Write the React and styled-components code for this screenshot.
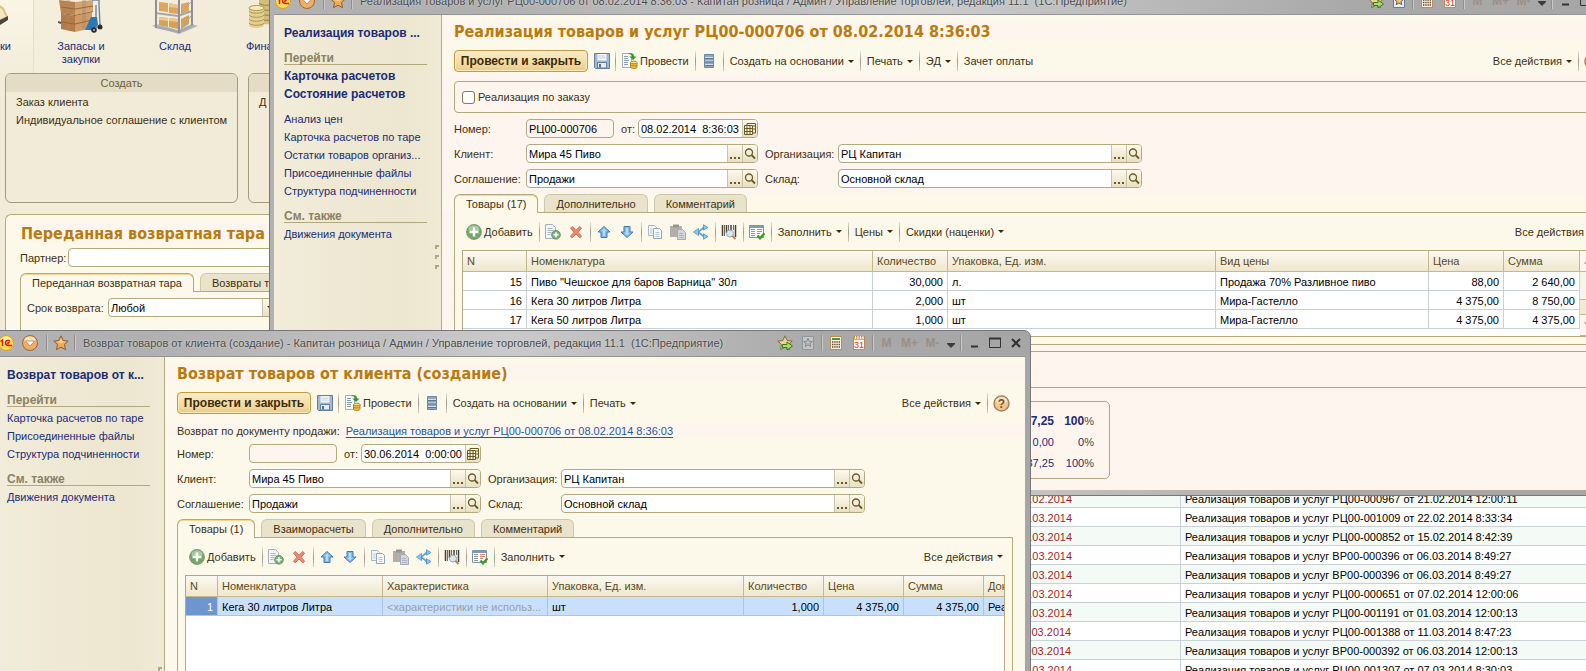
import styled, { createGlobalStyle } from "styled-components";

const GlobalStyle = createGlobalStyle`
    * {
        box-sizing: border-box;
    }
    body {
        margin: 0;
        overflow: hidden;
        font-family: "Liberation Sans", Arial, sans-serif;
        font-size: 11px;
        line-height: 18px;
        color: #3f3010;
    }
    button, input, select {
        font: inherit;
        color: inherit;
        margin: 0;
        padding: 0;
        border: 0;
        background: none;
    }
    a {
        color: #1b2c78;
        text-decoration: none;
    }
    svg {
        display: block;
        flex: none;
    }
`;

const LINE = "#b2a97f";
const CREAM = "#fcf9ea";
const PINK = "#fef5ee";

/* desktop */
const Desktop = styled.div`
    position: relative;
    height: 100vh;
    overflow: hidden;
    background: #f1ebd8;
`;
const Sections = styled.nav`
    display: flex;
    height: 73px;
    background: linear-gradient(90deg, #f4efdd, #f1ebd8 300px);
`;
const Section = styled.a`
    width: ${p => (p.$cut ? "34px" : "94px")};
    flex: none;
    display: flex;
    flex-direction: column;
    align-items: ${p => (p.$cut ? "flex-start" : "center")};
    gap: 6px;
    text-align: center;
    line-height: 13px;
    background: ${p => (p.$cut ? "linear-gradient(#faf6e6, #f2ecda)" : "none")};
    border-right: ${p => (p.$cut ? "1px solid #e6dfc8" : "0")};
`;
const SectionLabel = styled.span`
    max-width: 60px;
`;
const Cards = styled.div`
    display: flex;
    gap: 10px;
    padding: 0 5px;
`;
const Card = styled.section`
    width: 233px;
    height: 130px;
    border: 1px solid #a39b7b;
    border-radius: 6px;
    overflow: hidden;
`;
const CardTitle = styled.h2`
    margin: 0 0 1px;
    height: 18px;
    font-size: 11px;
    font-weight: 400;
    line-height: 18px;
    text-align: center;
    color: #6d6140;
    background: #e4dcc4;
`;
const CardLink = styled.a`
    display: block;
    padding-left: 10px;
    color: #3f3010;
`;
const Report = styled.section`
    isolation: isolate;
    margin: 11px 0 0 5px;
    padding: 8px 0 0 14px;
    border: 1px solid ${LINE};
    border-right: 0;
    border-radius: 6px 0 0 0;
    background: ${CREAM};
`;
const Heading = styled.h1`
    margin: 0;
    padding: 2px 0 0 1px;
    font-family: "DejaVu Sans Condensed", "DejaVu Sans", sans-serif;
    font-size: 16px;
    font-weight: 700;
    line-height: 17px;
    white-space: nowrap;
    color: #b97c0b;
    background: ${PINK};
`;
const ReportRow = styled.div`
    display: flex;
    align-items: center;
    gap: 2px;
    padding: 6px 0;
`;
const ReportBody = styled.div`
    border: 1px solid ${LINE};
    border-width: 1px 0 0 1px;
`;
const ListSpace = styled.div`
    height: 166px;
`;
const ListTable = styled.table`
    width: 100%;
    table-layout: fixed;
    border-spacing: 0;
    background: #fff;
    color: #000;
    td {
        height: 19px;
        padding: 2px 4px 0;
        line-height: 16px;
        border-right: 1px solid #c9d0d6;
        border-bottom: 1px solid #c9d0d6;
        white-space: nowrap;
    }
    td:last-child {
        border-right: 0;
    }
    tr:nth-child(odd) {
        background: #f4faf6;
    }
`;
const DateCell = styled.td`
    color: #a81e1e;
`;

/* windows */
const Frame = styled.section`
    position: absolute;
    left: ${p => p.$left}px;
    right: ${p => p.$right}px;
    top: ${p => p.$top}px;
    bottom: ${p => p.$bottom}px;
    display: flex;
    flex-direction: column;
    border: 1px solid #77777b;
    border-radius: 7px 7px 0 0;
    background: linear-gradient(90deg, #b2b2b2, #b0b0b0 15%, #cacaca 50%, #a9a9a9 80%, #a6a6a6);
    padding: 0 5px 5px 4px;
    overflow: hidden;
`;
const TitleBar = styled.header`
    display: flex;
    align-items: center;
    height: 26px;
    flex: none;
    margin-right: -1px;
    padding-bottom: 2px;
    border-bottom: 1px solid #939396;
`;
const TitleText = styled.span`
    flex: 1;
    margin-left: 6px;
    font-size: 11px;
    white-space: pre;
    overflow: hidden;
    color: #4c4c4c;
    text-shadow: 0 0 2px #e2e2e2;
`;
const BarButton = styled.button`
    display: flex;
    align-items: center;
    justify-content: center;
    width: ${p => p.$w || 23}px;
    height: 22px;
    flex: none;
`;
const MemoryButton = styled(BarButton)`
    font-size: 12px;
    font-weight: 700;
    color: #9a8f88;
`;
const BarSep = styled.i`
    width: 1px;
    height: 16px;
    flex: none;
    margin: 0 2px;
    background: #8f8f8f;
    box-shadow: 1px 0 0 #c8c8c8;
`;
const Client = styled.div`
    flex: 1;
    min-height: 0;
    display: flex;
    background: ${CREAM};
`;
const Sidebar = styled.aside`
    width: 168px;
    flex: none;
    display: flex;
    align-items: center;
    padding: 9px 2px 0 10px;
    border-right: 1px solid ${LINE};
    background: linear-gradient(90deg, #f2edda, #efe9d5 30%, #ede6d0 80%, #f0ead6);
`;
const Nav = styled.nav`
    flex: 1;
    min-width: 0;
    align-self: stretch;
`;
const NavLink = styled.a`
    display: block;
    white-space: nowrap;
    font-size: ${p => (p.$strong ? 12 : 11)}px;
    font-weight: ${p => (p.$strong ? 700 : 400)};
    margin-bottom: ${p => (p.$last ? 7 : 0)}px;
`;
const NavTitle = styled.h2`
    margin: 8px 0 2px;
    height: 15px;
    font-size: 12px;
    line-height: 16px;
    color: #8c8163;
    border-bottom: 1px solid ${LINE};
`;
const Grip = styled.div`
    display: grid;
    gap: 6px;
    margin-left: 8px;
    i {
        width: 4px;
        height: 4px;
        border: 1px solid #b2a97f;
        border-width: 2px 0 0 2px;
    }
`;
const Main = styled.main`
    flex: 1;
    min-width: 0;
    display: flex;
    flex-direction: column;
    background: ${p => p.$bg};
`;
const MainHeading = styled(Heading)`
    padding: 2px 12px 0;
    border-top: 6px solid ${CREAM};
`;
const CommandBar = styled.div`
    display: flex;
    align-items: center;
    height: 34px;
    flex: none;
    padding: 10px 12px 2px;
    background: ${CREAM};
`;
const TableBar = styled.div`
    display: flex;
    align-items: center;
    height: 37px;
    flex: none;
    padding: 0 5px 0 7px;
`;
const PrimaryButton = styled.button`
    width: 134px;
    height: 22px;
    flex: none;
    margin-right: 2px;
    border: 1px solid #c49a45;
    border-radius: 4px;
    box-shadow: inset 0 0 0 1px #fbe8b8;
    background: linear-gradient(#fbedca, #f3dba2 60%, #e9cc88);
    font-size: 12px;
    font-weight: 700;
    line-height: 18px;
    white-space: nowrap;
    color: #3b2a08;
`;
const ToolButton = styled.button`
    display: flex;
    align-items: center;
    gap: ${p => (p.$icon ? 2 : 4)}px;
    flex: none;
    padding: 0 4px;
    white-space: nowrap;
`;
const IconButton = styled.button`
    display: flex;
    justify-content: center;
    width: 23px;
    flex: none;
`;
const ToolSep = styled.i`
    width: 1px;
    height: 20px;
    flex: none;
    margin: 0 2px;
    background: linear-gradient(#e9e2d8, #9c958e 50%, #d5cec4);
`;
const Push = styled.span`
    flex: 1;
`;
const Form = styled.div`
    display: flex;
    flex-direction: column;
    gap: 6px;
    padding: 7px 12px 6px;
`;
const Group = styled.div`
    display: flex;
    align-items: center;
    gap: 3px;
    height: ${p => p.$h}px;
    padding-left: 7px;
    border: 1px solid ${LINE};
    border-radius: 4px;
`;
const Check = styled.input`
    appearance: none;
    width: 13px;
    height: 13px;
    border: 1px solid #857b56;
    border-radius: 3px;
    background: #fff;
`;
const SourceLine = styled.div`
    display: flex;
    gap: 6px;
    margin: 0 -12px;
    padding: 1px 12px 0;
    line-height: 14px;
    background: ${PINK};
    a {
        color: #1c58a8;
        text-decoration: underline;
        text-underline-offset: 2px;
    }
`;
const FieldRow = styled.div`
    display: flex;
    align-items: center;
    height: 19px;
`;
const Label = styled.label`
    width: ${p => (p.$w ? p.$w + "px" : "auto")};
    margin-left: ${p => p.$gap || 0}px;
    flex: none;
    white-space: nowrap;
`;
const Field = styled.span`
    display: flex;
    width: ${p => p.$w}px;
    height: 19px;
    flex: none;
    border: 1px solid ${LINE};
    border-radius: 4px;
    overflow: hidden;
    color: #000;
    background: ${p => (p.$plain ? PINK : "#fff")};
    input, select {
        flex: 1;
        min-width: 0;
        padding-left: 2px;
        appearance: none;
        outline: 0;
    }
`;
const FieldButton = styled.button`
    display: flex;
    align-items: center;
    justify-content: center;
    width: 15px;
    flex: none;
    border-left: 1px solid #cbc3a1;
    background: linear-gradient(#fdfaec, #e8e0c5);
`;
const Tabs = styled.div`
    display: flex;
    gap: 6px;
    height: 18px;
    flex: none;
    padding: 0 ${p => (p.$flush ? 0 : 12)}px;
    background: ${CREAM};
`;
const Tab = styled.button`
    height: ${p => (p.$active ? 19 : 18)}px;
    flex: none;
    padding: 0 11px;
    line-height: 16px;
    white-space: nowrap;
    border: 1px solid ${p => (p.$active ? LINE : "#cfc8a6")};
    border-bottom: 0;
    border-radius: 6px 6px 0 0;
    background: ${p => (p.$active ? CREAM : "#e9e3cc")};
    box-shadow: ${p => (p.$active ? "inset 0 1px 0 #f6d58f" : "none")};
    z-index: 1;
`;
const Panel = styled.div`
    flex: ${p => (p.$fill ? "1" : "none")};
    min-height: 0;
    display: flex;
    flex-direction: column;
    margin: 0 12px;
    padding-bottom: ${p => (p.$fill ? 0 : 7)}px;
    border: 1px solid ${LINE};
    background: ${CREAM};
`;
const Grid = styled.div`
    flex: ${p => (p.$fill ? "1" : "none")};
    display: flex;
    margin: 0 7px;
    border: 1px solid ${LINE};
    background: #fff;
    overflow: hidden;
`;
const GridBody = styled.div`
    flex: 1;
    min-width: 0;
    overflow: hidden;
    padding-bottom: 7px;
`;
const Table = styled.table`
    width: ${p => p.$w};
    table-layout: fixed;
    border-spacing: 0;
    color: #000;
    th, td {
        padding: 0 4px;
        white-space: nowrap;
        overflow: hidden;
        text-overflow: ellipsis;
        text-align: left;
    }
    th {
        height: 21px;
        font-weight: 400;
        color: #5c4a20;
        background: linear-gradient(#fbf9f2, #efe7cc);
        border-right: 1px solid #c2b990;
        border-bottom: 1px solid #c2b990;
    }
    td {
        height: 19px;
        padding-top: 2px;
        line-height: 16px;
        border-right: 1px solid ${p => (p.$selected ? "#a9c6ea" : "#c9d0d6")};
        border-bottom: 1px solid ${p => (p.$selected ? "#a9c6ea" : "#c9d0d6")};
        background: ${p => (p.$selected ? "#c8e0fe" : "#fff")};
    }
    th:last-child, td:last-child {
        text-overflow: clip;
    }
`;
const Num = styled.td`
    &&& {
        text-align: right;
    }
`;
const CurrentCell = styled(Num)`
    &&& {
        color: #fff;
        background: #6c96cd;
    }
`;
const EmptyCell = styled.td`
    &&& {
        color: #9a9fa8;
    }
`;
const Scroll = styled.div`
    width: 15px;
    flex: none;
    display: flex;
    flex-direction: column;
    background: #f7f4ea;
`;
const ScrollEnd = styled.button`
    display: flex;
    align-items: center;
    justify-content: center;
    height: 21px;
    flex: none;
    border-bottom: 1px solid #c2b990;
    background: ${PINK};
`;
const ScrollThumb = styled.div`
    height: 16px;
    flex: none;
    margin-top: 27px;
    border: 1px solid #c2b990;
    border-width: 1px 0;
    background: #f1ead2;
`;
const Footer = styled.div`
    padding: 6px 12px 0;
`;
const Totals = styled.table`
    width: 656px;
    height: 78px;
    margin-top: 13px;
    padding: 8px 15px 5px 0;
    border: 1px solid ${LINE};
    border-radius: 5px;
    border-spacing: 0;
    color: #1b2c78;
    td {
        height: 21px;
        padding: 0;
        text-align: right;
    }
    td + td {
        width: 40px;
    }
    tr:first-child {
        font-size: 12px;
        font-weight: 700;
    }
    small {
        font-size: 11px;
        font-weight: 400;
        color: #4c4740;
    }
`;

/* icons */
const Svg = ({ w = 16, h = 16, children }) => (
    <svg width={w} height={h} viewBox={`0 0 ${w} ${h}`} fill="none" aria-hidden="true">
        {children}
    </svg>
);
const Caret = () => (
    <Svg w={6} h={3}>
        <path d="M0 0h6L3 3z" fill="#3a2a0c" />
    </Svg>
);
const ScrollMark = ({ down }) => (
    <Svg w={8} h={6}>
        <path d={down ? "M0 0h8L4 6z" : "M0 6h8L4 0z"} fill="#b3aa92" />
    </Svg>
);
const Logo = () => (
    <Svg>
        <circle cx="8" cy="8" r="7.5" fill="#fbdc4f" stroke="#e9952b" />
        <ellipse cx="8" cy="4.5" rx="5" ry="3" fill="#fff3a8" />
        <path d="M2.5 6.5l2-1.5v6M12 6.5c-.6-1.4-4.5-1.6-4.5 1.3S10 10.5 14 10.5M11.5 7.8c-1.5-.8-2.5.8-1 1.2" stroke="#d8201a" strokeWidth="1.5" />
    </Svg>
);
const MenuBall = () => (
    <Svg>
        <circle cx="8" cy="8" r="7.5" fill="#f0ae64" stroke="#9a6a3a" />
        <ellipse cx="8" cy="4.8" rx="5.5" ry="3.3" fill="#fbe2c0" />
        <path d="M3.5 6h9L8 11z" fill="#fff" stroke="#a0713f" strokeWidth=".7" />
    </Svg>
);
const starPath = "M8 .8l2.2 4.7 5 .6-3.7 3.5 1 5.1L8 12.2l-4.5 2.5 1-5.1L.8 6.1l5-.6z";
const Star = () => (
    <Svg>
        <path d={starPath} fill="#f5a94e" stroke="#8a6038" />
        <path d="M8 3l1.3 3.3 3 .4L8 8.5 3.7 6.7l3-.4z" fill="#fbce90" />
    </Svg>
);
const StarGo = () => (
    <Svg>
        <path d={starPath} fill="#f7cd8c" stroke="#7d6a4a" />
        <path d="M5.5 9.5H10V7l5.500 4-5.500 4v-2.500H5.500z" fill="#a6e06a" stroke="#357a1e" />
    </Svg>
);
const PageStar = ({ faded }) => (
    <Svg>
        <g opacity={faded ? 0.4 : 1}>
            <path d="M2.5 1.5h11v13h-11z" fill="#e4edf6" stroke="#5f7f9f" />
            <path d="M8 3.5l1.3 2.800 3 .3-2.200 2 .6 3L8 10l-2.700 1.600.6-3-2.200-2 3-.3z" fill={faded ? "#c5cdd6" : "#eec287"} stroke="#6b5a4a" />
        </g>
    </Svg>
);
const Calc = () => (
    <Svg>
        <path d="M2.5 1.5h11v13h-11z" fill="#fff3df" stroke="#b98a5b" />
        <path d="M4 3h8v2H4z" fill="#3f9a3f" />
        <path d="M4 7h8M4 9.5h8M4 12h8" stroke="#5a4630" strokeWidth="1.4" strokeDasharray="1.4 .8" />
    </Svg>
);
const CalendarDay = () => (
    <svg width="16" height="16" viewBox="0 0 16 16" aria-hidden="true">
        <path d="M2.5 1.5h11v13h-11z" fill="#fff8ee" stroke="#b98a5b" />
        <path d="M3 2h10v3H3z" fill="#f2a64e" />
        <path d="M4.5 1v3M7 1v3M9.5 1v3M12 1v3" stroke="#fff" />
        <text x="8" y="13" textAnchor="middle" fontSize="9" fontFamily="Liberation Sans" fill="#d03a1c">31</text>
    </svg>
);
const MoreMark = () => (
    <Svg w={8} h={11}>
        <path d="M0 6h8v1L4 11 0 7z" fill="#3c3c3c" />
    </Svg>
);
const Minimize = () => (
    <Svg w={12} h={12}>
        <path d="M3 9.5h7" stroke="#333" strokeWidth="2" />
    </Svg>
);
const Maximize = () => (
    <Svg w={12} h={12}>
        <path d="M.5 1.5h11v9H.5z" stroke="#333" />
        <path d="M0 1.5h12" stroke="#333" strokeWidth="2" />
    </Svg>
);
const Close = () => (
    <Svg w={12} h={12}>
        <path d="M2 2l8 8M10 2l-8 8" stroke="#333" strokeWidth="2.2" />
    </Svg>
);
const Save = () => (
    <Svg>
        <path d="M.5.5h15v15h-14l-1-1z" fill="#a3b8d0" stroke="#637f9e" />
        <path d="M3.5 1h9v6.5h-9z" fill="#f6f8fb" />
        <path d="M4.5 3h7M4.5 5h7" stroke="#c3cedb" />
        <path d="M3.5 9.5h9V15h-9z" fill="#e6ebf0" stroke="#637f9e" />
        <path d="M5 11h2v3.5H5z" fill="#566f8a" />
    </Svg>
);
const Post = () => (
    <Svg>
        <path d="M.5.5h9v14h-9z" fill="#f6f8f9" stroke="#a2aeb9" />
        <path d="M2 3.5h4M2 5.5h4M2 7.5h5M2 9.5h4M2 11.5h4" stroke="#8b9aa8" />
        <path d="M6 .8c4-1.2 6 0 6 2.7h2.5L11 7 7.5 3.5H10c0-1.3-1-2.2-4-2.7z" fill="#2f9a2b" />
        <path d="M8.5 9.5V14c0 2 6.5 2 6.5 0V9.5z" fill="#edc04a" stroke="#b4851f" />
        <ellipse cx="11.8" cy="9.5" rx="3.2" ry="1.3" fill="#fbe28c" stroke="#b4851f" />
        <path d="M8.5 12c1 1.3 5.5 1.3 6.5 0" stroke="#b4851f" />
    </Svg>
);
const Stack = () => (
    <Svg>
        <path d="M3.5 1.5h9v13h-9z" fill="#8fa7bf" stroke="#6f88a2" />
        <path d="M4 4.5h8M4 8h8M4 11.5h8" stroke="#d5e0ea" />
        <path d="M4 5.5h8M4 9h8M4 12.5h8" stroke="#5d7690" />
    </Svg>
);
const Help = () => (
    <svg width="17" height="17" viewBox="0 0 17 17" aria-hidden="true">
        <circle cx="8.5" cy="8.5" r="7.5" fill="#f3c58d" stroke="#a3845c" strokeWidth="1.5" />
        <ellipse cx="8.5" cy="5.5" rx="5.5" ry="3.5" fill="#fbe4c4" />
        <text x="8.5" y="13" textAnchor="middle" fontSize="12" fontWeight="700" fontFamily="Liberation Sans" fill="#75501f">?</text>
    </svg>
);
const Plus = () => (
    <Svg>
        <circle cx="8" cy="8" r="7.3" fill="#70a864" stroke="#7f9a7a" strokeWidth="1.2" />
        <ellipse cx="8" cy="5" rx="5.5" ry="3.5" fill="#a5cc9c" />
        <path d="M8 3.5v9M3.5 8h9" stroke="#fff" strokeWidth="2.4" />
    </Svg>
);
const PageAdd = () => (
    <Svg>
        <path d="M.5.5h7l3 3v11H.5z" fill="#f2f6f9" stroke="#a3b0bd" />
        <path d="M2.5 4.5h5M2.5 6.5h6M2.5 8.5h4M2.5 10.5h3" stroke="#a9b6c3" />
        <circle cx="11" cy="10.8" r="4.3" fill="#7db274" stroke="#6a9162" />
        <path d="M11 8.3v5M8.5 10.8h5" stroke="#fff" strokeWidth="1.5" />
    </Svg>
);
const Cross = () => (
    <Svg>
        <path d="M2.5 4.2l1.7-1.7L8 6.2l3.8-3.7 1.7 1.7L10 8.2l3.5 4-1.7 1.7L8 10l-3.8 3.9-1.7-1.7 3.5-4z" fill="#ee8a73" stroke="#cf6b55" />
    </Svg>
);
const Arrow = ({ down }) => (
    <Svg>
        <g transform={down ? "rotate(180 8 8)" : undefined}>
            <path d="M8 2.5L14 8h-3v5.5H5V8H2z" fill="#7dbcee" stroke="#4878a8" strokeLinejoin="round" />
            <path d="M8 4.5L10.5 7H9v5H7V7H5.5z" fill="#b4dbf8" />
        </g>
    </Svg>
);
const Copy = () => (
    <Svg>
        <path d="M1.5 1.5h6l2 2v8h-8z" fill="#f3f7fa" stroke="#a6b8ca" />
        <path d="M6.5 4.5h6l2 2v8h-8z" fill="#f9fbfd" stroke="#8fa6bf" />
        <path d="M8.5 8.5h4M8.5 10.5h4M8.5 12.5h4M3 5h2.5M3 7h2.5M3 9h2.5" stroke="#b4c5d7" />
    </Svg>
);
const Paste = () => (
    <Svg>
        <path d="M0 2h12v11H0z" fill="#b3aeaa" />
        <path d="M3 .5h6v3H3z" fill="#98948f" />
        <path d="M7.5 5.5h5l3 3v7h-8z" fill="#d2d7de" stroke="#a4adb7" />
        <path d="M9 9.5h4M9 11.5h5M9 13.5h5" stroke="#adb5be" />
    </Svg>
);
const Share = () => (
    <Svg>
        <path d="M12 3.5C8 3.5 8 8 4 8c4 0 4 4.5 8 4.5" stroke="#5a9fcf" strokeWidth="1.8" />
        <path d="M.5 8l5-3.5v7zM10.5.8L15 3.5l-4.5 2.7zM10.5 9.8l4.5 2.7-4.5 2.7z" fill="#8fc8ea" stroke="#4a8fc4" strokeWidth=".8" />
    </Svg>
);
const Barcode = () => (
    <Svg>
        <path d="M1.5 1v11M5.5 1v8M10 1v5M14.5 1v12" stroke="#4a4238" strokeWidth="1.5" />
        <path d="M3.5 1v11M7.5 1v5M12.5 1v5" stroke="#4a4238" strokeWidth=".8" />
        <circle cx="9" cy="9.5" r="3.5" fill="#d6e8f6" stroke="#9aa8b4" />
        <path d="M11.5 12l3 3" stroke="#c08457" strokeWidth="2" />
    </Svg>
);
const Checklist = () => (
    <Svg>
        <path d="M.5 1.5h14v12H.5z" fill="#fbfcfd" stroke="#8094a8" />
        <path d="M1 2h13v2H1z" fill="#7f9ab5" />
        <path d="M2 5.5h4M2 7.5h4M2 9.5h4M2 11.5h4" stroke="#8d9aa7" />
        <path d="M8 5.5h5M8 7.5h5M8 9.5h3" stroke="#d98470" />
        <path d="M8.5 11.5l2.5 2.8 4.5-5" stroke="#3f9c2c" strokeWidth="2.4" />
    </Svg>
);
const Lens = () => (
    <Svg w={12} h={12}>
        <circle cx="5" cy="4.5" r="3.5" stroke="#6b5a22" strokeWidth="1.3" />
        <path d="M7.5 7l3.5 3.5" stroke="#6b5a22" strokeWidth="1.8" />
    </Svg>
);
const Dots = () => (
    <Svg w={10} h={12}>
        <path d="M0 9h2v2H0zM4 9h2v2H4zM8 9h2v2H8z" fill="#6b5a22" />
    </Svg>
);
const DateIcon = () => (
    <Svg w={12} h={12}>
        <path d="M3 .5h8.5V10H9M3 .5V3" stroke="#6b5a22" />
        <path d="M.5 2.5h8v9h-8z" fill="#f4efd9" stroke="#6b5a22" />
        <path d="M.5 5.5h8M.5 8.5h8M3 2.5v9M6 2.5v9M9 3h2M9 6h2" stroke="#6b5a22" />
    </Svg>
);
const SalesPicture = () => (
    <svg width="10" height="34" viewBox="0 0 10 34" aria-hidden="true">
        <path d="M0 5l4 3 4 9-8 3z" fill="#dcc284" />
        <path d="M0 8l2 1 4 8-6 2z" fill="#f4e8c2" />
        <path d="M0 20l8-4v4l-8 5z" fill="#4b4540" />
    </svg>
);
const BoxesPicture = () => (
    <svg width="46" height="34" viewBox="0 0 46 34" aria-hidden="true">
        <path d="M1 0l16 2v13L3 13z" fill="#b98250" />
        <path d="M17 2l18-2v11l-18 4z" fill="#d3a473" />
        <path d="M3 14l14 2v16L3 29z" fill="#b67a48" />
        <path d="M17 16l17-4v16l-17 4z" fill="#cf9a66" />
        <path d="M9 0v30M11 0v31M25 0v30M27 0v29" stroke="#a98a68" strokeWidth=".8" />
        <path d="M3 7l14 2 18-3M3 22l14 2 17-4M3 13.5l14 2 18-4" stroke="#96663c" fill="none" />
        <path d="M0 22l3 1" stroke="#555" strokeWidth="2" />
        <path d="M34 0h7v5l1 20-4 3M38 5v18" stroke="#6a89a8" strokeWidth="1.4" fill="none" />
        <path d="M27 30l6-13h6l1 8-5 5z" fill="#2a78b8" />
        <circle cx="36" cy="30" r="2.8" fill="#2d2d30" />
        <circle cx="36" cy="30" r="1" fill="#b8b8b8" />
        <circle cx="42" cy="27" r="2.5" fill="#2d2d30" />
    </svg>
);
const RackPicture = () => (
    <svg width="46" height="34" viewBox="0 0 46 34" aria-hidden="true">
        <path d="M0 26l27 8 19-8-6-2-14 6-22-6z" fill="#b4b4b8" />
        <path d="M7 2l9 1v9L7 11zM17 3l9 2v9l-9-1zM29 4l8-2v9l-8 3z" fill="#dca75c" />
        <path d="M7 17l9 1v9l-9-2zM17 18l9 1v10l-9-2zM29 19l8-4v9l-8 5z" fill="#d8a054" />
        <path d="M7 17l9 1v3l-9-1zM17 18l9 1v3l-9-1zM17 3l9 2v3l-9-1z" fill="#edc68a" />
        <path d="M3 13l23 3 14-5M3 27l24 5 14-7" stroke="#a5a8ae" strokeWidth="2" fill="none" />
        <path d="M4 0v28M27 0v33M40 0v25" stroke="#8c8f98" strokeWidth="2" />
        <path d="M29 13l10-11M29 29l10-13" stroke="#a5a8ae" />
    </svg>
);
const CoinsPicture = () => (
    <svg width="46" height="34" viewBox="0 0 46 34" aria-hidden="true">
        <path d="M13 0v22c0 3 16 3 16 0V0z" fill="#d3bd7c" />
        <path d="M13 3c2 3 14 3 16 0M13 8c2 3 14 3 16 0M13 13c2 3 14 3 16 0M13 18c2 3 14 3 16 0" stroke="#9a8344" fill="none" />
        <path d="M3 8v17c0 4 15 4 15 0V8z" fill="#e3d08f" />
        <path d="M3 11c2 3 13 3 15 0M3 15c2 3 13 3 15 0M3 19c2 3 13 3 15 0M3 23c2 3 13 3 15 0" stroke="#ac9654" fill="none" />
        <ellipse cx="10.5" cy="8" rx="7.5" ry="2.5" fill="#f5eab9" stroke="#ac9654" />
    </svg>
);

/* parts */
const Menu = ({ children }) => (
    <ToolButton>
        {children}
        <Caret />
    </ToolButton>
);

function LookupField({ id, value, w }) {
    return (
        <Field $w={w}>
            <input id={id} defaultValue={value} />
            <FieldButton aria-label="Выбрать"><Dots /></FieldButton>
            <FieldButton aria-label="Открыть"><Lens /></FieldButton>
        </Field>
    );
}

function DocumentFields({ prefix, number, date }) {
    return (
        <>
            <FieldRow>
                <Label htmlFor={prefix + "num"} $w={72}>Номер:</Label>
                <Field $w={88} $plain><input id={prefix + "num"} defaultValue={number} /></Field>
                <Label htmlFor={prefix + "date"} $w={17} $gap={7}>от:</Label>
                <Field $w={120}>
                    <input id={prefix + "date"} defaultValue={date} />
                    <FieldButton aria-label="Календарь"><DateIcon /></FieldButton>
                </Field>
            </FieldRow>
            <FieldRow>
                <Label htmlFor={prefix + "client"} $w={72}>Клиент:</Label>
                <LookupField id={prefix + "client"} value="Мира 45 Пиво" w={232} />
                <Label htmlFor={prefix + "org"} $w={73} $gap={7}>Организация:</Label>
                <LookupField id={prefix + "org"} value="РЦ Капитан" w={304} />
            </FieldRow>
            <FieldRow>
                <Label htmlFor={prefix + "deal"} $w={72}>Соглашение:</Label>
                <LookupField id={prefix + "deal"} value="Продажи" w={232} />
                <Label htmlFor={prefix + "store"} $w={73} $gap={7}>Склад:</Label>
                <LookupField id={prefix + "store"} value="Основной склад" w={304} />
            </FieldRow>
        </>
    );
}

function TitleBarRow({ title, faded }) {
    return (
        <TitleBar>
            <BarButton $w={18} aria-label="1С"><Logo /></BarButton>
            <BarButton $w={29} aria-label="Меню"><MenuBall /></BarButton>
            <BarSep />
            <BarButton aria-label="Избранное"><Star /></BarButton>
            <BarSep />
            <TitleText>{title}</TitleText>
            <BarButton aria-label="В избранное"><StarGo /></BarButton>
            <BarButton aria-label="Ссылка"><PageStar faded={faded} /></BarButton>
            <BarSep />
            <BarButton aria-label="Калькулятор"><Calc /></BarButton>
            <BarButton aria-label="Календарь"><CalendarDay /></BarButton>
            <BarSep />
            <MemoryButton>M</MemoryButton>
            <MemoryButton>M+</MemoryButton>
            <MemoryButton>M-</MemoryButton>
            <BarButton $w={14} aria-label="Ещё"><MoreMark /></BarButton>
            <BarSep />
            <BarButton $w={21} aria-label="Свернуть"><Minimize /></BarButton>
            <BarButton $w={21} aria-label="Развернуть"><Maximize /></BarButton>
            <BarButton $w={21} aria-label="Закрыть"><Close /></BarButton>
        </TitleBar>
    );
}

function SideNav({ title, strong = [], links }) {
    return (
        <Sidebar>
            <Nav>
                <NavLink href="#" $strong>{title}</NavLink>
                <NavTitle>Перейти</NavTitle>
                {strong.map((text, i) => (
                    <NavLink href="#" key={text} $strong $last={i === strong.length - 1}>{text}</NavLink>
                ))}
                {links.map(text => (
                    <NavLink href="#" key={text}>{text}</NavLink>
                ))}
                <NavTitle>См. также</NavTitle>
                <NavLink href="#">Движения документа</NavLink>
            </Nav>
            <Grip><i /><i /><i /></Grip>
        </Sidebar>
    );
}

function Commands({ children }) {
    return (
        <CommandBar>
            <PrimaryButton>Провести и закрыть</PrimaryButton>
            <IconButton aria-label="Записать"><Save /></IconButton>
            <ToolSep />
            <ToolButton $icon><Post />Провести</ToolButton>
            <ToolSep />
            <IconButton aria-label="Движения"><Stack /></IconButton>
            <ToolSep />
            <Menu>Создать на основании</Menu>
            <ToolSep />
            <Menu>Печать</Menu>
            {children}
            <Push />
            <Menu>Все действия</Menu>
            <ToolSep />
            <IconButton aria-label="Справка"><Help /></IconButton>
        </CommandBar>
    );
}

function RowCommands({ children }) {
    return (
        <TableBar>
            <ToolButton $icon><Plus />Добавить</ToolButton>
            <ToolSep />
            <IconButton aria-label="Скопировать"><PageAdd /></IconButton>
            <IconButton aria-label="Удалить"><Cross /></IconButton>
            <ToolSep />
            <IconButton aria-label="Вверх"><Arrow /></IconButton>
            <IconButton aria-label="Вниз"><Arrow down /></IconButton>
            <ToolSep />
            <IconButton aria-label="Копировать строки"><Copy /></IconButton>
            <IconButton aria-label="Вставить строки"><Paste /></IconButton>
            <IconButton aria-label="Разбить строку"><Share /></IconButton>
            <ToolSep />
            <IconButton aria-label="Штрихкод"><Barcode /></IconButton>
            <ToolSep />
            <IconButton aria-label="Подбор"><Checklist /></IconButton>
            <ToolSep />
            <Menu>Заполнить</Menu>
            {children}
            <Push />
            <Menu>Все действия</Menu>
        </TableBar>
    );
}

const saleRows = [
    ["15", "Пиво \"Чешское для баров Варница\" 30л", "30,000", "л.", "Продажа 70% Разливное пиво", "88,00", "2 640,00"],
    ["16", "Кега 30 литров Литра", "2,000", "шт", "Мира-Гастелло", "4 375,00", "8 750,00"],
    ["17", "Кега 50 литров Литра", "1,000", "шт", "Мира-Гастелло", "4 375,00", "4 375,00"],
];

function SaleWindow() {
    return (
        <Frame $left={269} $right={-36} $top={-12} $bottom={175}>
            <TitleBarRow title="Реализация товаров и услуг РЦ00-000706 от 08.02.2014 8:36:03 - Капитан розница / Админ / Управление торговлей, редакция 11.1  (1С:Предприятие)" />
            <Client>
                <SideNav
                    title="Реализация товаров ..."
                    strong={["Карточка расчетов", "Состояние расчетов"]}
                    links={["Анализ цен", "Карточка расчетов по таре", "Остатки товаров организ...", "Присоединенные файлы", "Структура подчиненности"]}
                />
                <Main $bg={PINK}>
                    <MainHeading>Реализация товаров и услуг РЦ00-000706 от 08.02.2014 8:36:03</MainHeading>
                    <Commands>
                        <ToolSep />
                        <Menu>ЭД</Menu>
                        <ToolSep />
                        <ToolButton>Зачет оплаты</ToolButton>
                    </Commands>
                    <Form>
                        <Group $h={32}>
                            <Check type="checkbox" id="byorder" />
                            <Label htmlFor="byorder">Реализация по заказу</Label>
                        </Group>
                        <DocumentFields prefix="s" number="РЦ00-000706" date="08.02.2014  8:36:03" />
                    </Form>
                    <Tabs>
                        <Tab $active>Товары (17)</Tab>
                        <Tab>Дополнительно</Tab>
                        <Tab>Комментарий</Tab>
                    </Tabs>
                    <Panel>
                        <RowCommands>
                            <ToolSep />
                            <Menu>Цены</Menu>
                            <ToolSep />
                            <Menu>Скидки (наценки)</Menu>
                        </RowCommands>
                        <Grid>
                            <GridBody>
                                <Table $w="100%">
                                    <colgroup>
                                        <col width="64" /><col width="346" /><col width="75" /><col />
                                        <col width="213" /><col width="75" /><col width="76" />
                                    </colgroup>
                                    <thead>
                                        <tr>
                                            <th>N</th><th>Номенклатура</th><th>Количество</th><th>Упаковка, Ед. изм.</th>
                                            <th>Вид цены</th><th>Цена</th><th>Сумма</th>
                                        </tr>
                                    </thead>
                                    <tbody>
                                        {saleRows.map(r => (
                                            <tr key={r[0]}>
                                                <Num>{r[0]}</Num>
                                                <td>{r[1]}</td>
                                                <Num>{r[2]}</Num>
                                                <td>{r[3]}</td>
                                                <td>{r[4]}</td>
                                                <Num>{r[5]}</Num>
                                                <Num>{r[6]}</Num>
                                            </tr>
                                        ))}
                                    </tbody>
                                </Table>
                            </GridBody>
                            <Scroll>
                                <ScrollEnd aria-label="Вверх"><ScrollMark /></ScrollEnd>
                                <ScrollThumb />
                                <ScrollEnd aria-label="Вниз"><ScrollMark down /></ScrollEnd>
                            </Scroll>
                        </Grid>
                    </Panel>
                    <Footer>
                        <Group $h={37} />
                        <Totals>
                            <tbody>
                                <tr><td>37,25</td><td>100<small>%</small></td></tr>
                                <tr><td>0,00</td><td>0<small>%</small></td></tr>
                                <tr><td>37,25</td><td>100<small>%</small></td></tr>
                            </tbody>
                        </Totals>
                    </Footer>
                </Main>
            </Client>
        </Frame>
    );
}

function ReturnWindow() {
    return (
        <Frame $left={-8} $right={555} $top={330} $bottom={-326}>
            <TitleBarRow faded title="Возврат товаров от клиента (создание) - Капитан розница / Админ / Управление торговлей, редакция 11.1  (1С:Предприятие)" />
            <Client>
                <SideNav
                    title="Возврат товаров от к..."
                    links={["Карточка расчетов по таре", "Присоединенные файлы", "Структура подчиненности"]}
                />
                <Main $bg={CREAM}>
                    <MainHeading>Возврат товаров от клиента (создание)</MainHeading>
                    <Commands />
                    <Form>
                        <SourceLine>
                            <span>Возврат по документу продажи:</span>
                            <a href="#">Реализация товаров и услуг РЦ00-000706 от 08.02.2014 8:36:03</a>
                        </SourceLine>
                        <DocumentFields prefix="r" number="" date="30.06.2014  0:00:00" />
                    </Form>
                    <Tabs>
                        <Tab $active>Товары (1)</Tab>
                        <Tab>Взаиморасчеты</Tab>
                        <Tab>Дополнительно</Tab>
                        <Tab>Комментарий</Tab>
                    </Tabs>
                    <Panel $fill>
                        <RowCommands />
                        <Grid $fill>
                            <GridBody>
                                <Table $w="980px" $selected>
                                    <colgroup>
                                        <col width="32" /><col width="165" /><col width="165" /><col width="196" />
                                        <col width="80" /><col width="80" /><col width="80" /><col />
                                    </colgroup>
                                    <thead>
                                        <tr>
                                            <th>N</th><th>Номенклатура</th><th>Характеристика</th><th>Упаковка, Ед. изм.</th>
                                            <th>Количество</th><th>Цена</th><th>Сумма</th><th>Документ реализации</th>
                                        </tr>
                                    </thead>
                                    <tbody>
                                        <tr>
                                            <CurrentCell>1</CurrentCell>
                                            <td>Кега 30 литров Литра</td>
                                            <EmptyCell>&lt;характеристики не использ...</EmptyCell>
                                            <td>шт</td>
                                            <Num>1,000</Num>
                                            <Num>4 375,00</Num>
                                            <Num>4 375,00</Num>
                                            <td>Реализация товаров</td>
                                        </tr>
                                    </tbody>
                                </Table>
                            </GridBody>
                        </Grid>
                    </Panel>
                </Main>
            </Client>
        </Frame>
    );
}

const documents = [
    ["28.02.2014", "РЦ00-000967 от 21.02.2014 12:00:11"],
    ["01.03.2014", "РЦ00-001009 от 22.02.2014 8:33:34"],
    ["01.03.2014", "РЦ00-000852 от 15.02.2014 8:42:39"],
    ["06.03.2014", "ВР00-000396 от 06.03.2014 8:49:27"],
    ["06.03.2014", "ВР00-000396 от 06.03.2014 8:49:27"],
    ["07.03.2014", "РЦ00-000651 от 07.02.2014 12:00:06"],
    ["08.03.2014", "РЦ00-001191 от 01.03.2014 12:00:13"],
    ["11.03.2014", "РЦ00-001388 от 11.03.2014 8:47:23"],
    ["11.03.2014", "ВР00-000392 от 06.03.2014 12:00:13"],
    ["12.03.2014", "РЦ00-001307 от 07.03.2014 8:30:03"],
];

function App() {
    return (
        <Desktop>
            <GlobalStyle />
            <Sections>
                <Section href="#" $cut><SalesPicture /><SectionLabel>ки</SectionLabel></Section>
                <Section href="#"><BoxesPicture /><SectionLabel>Запасы и закупки</SectionLabel></Section>
                <Section href="#"><RackPicture /><SectionLabel>Склад</SectionLabel></Section>
                <Section href="#"><CoinsPicture /><SectionLabel>Финансы</SectionLabel></Section>
            </Sections>
            <Cards>
                <Card>
                    <CardTitle>Создать</CardTitle>
                    <CardLink href="#">Заказ клиента</CardLink>
                    <CardLink href="#">Индивидуальное соглашение с клиентом</CardLink>
                </Card>
                <Card>
                    <CardTitle />
                    <CardLink href="#">Д</CardLink>
                </Card>
            </Cards>
            <Report>
                <Heading>Переданная возвратная тара</Heading>
                <ReportRow>
                    <Label htmlFor="partner" $w={46}>Партнер:</Label>
                    <Field $w={400}><input id="partner" /></Field>
                </ReportRow>
                <Tabs $flush>
                    <Tab $active>Переданная возвратная тара</Tab>
                    <Tab>Возвраты тары</Tab>
                </Tabs>
                <ReportBody>
                    <ReportRow>
                        <Label htmlFor="term" $w={79} $gap={6}>Срок возврата:</Label>
                        <Field $w={170}>
                            <select id="term"><option>Любой</option></select>
                            <FieldButton aria-label="Выбрать"><Caret /></FieldButton>
                        </Field>
                    </ReportRow>
                    <ListSpace />
                    <ListTable>
                        <colgroup>
                            <col width="992" /><col width="168" /><col />
                        </colgroup>
                        <tbody>
                            {documents.map(([date, ref], i) => (
                                <tr key={i}>
                                    <td />
                                    <DateCell>{date}</DateCell>
                                    <td>Реализация товаров и услуг {ref}</td>
                                </tr>
                            ))}
                        </tbody>
                    </ListTable>
                </ReportBody>
            </Report>
            <SaleWindow />
            <ReturnWindow />
        </Desktop>
    );
}

export default App;
